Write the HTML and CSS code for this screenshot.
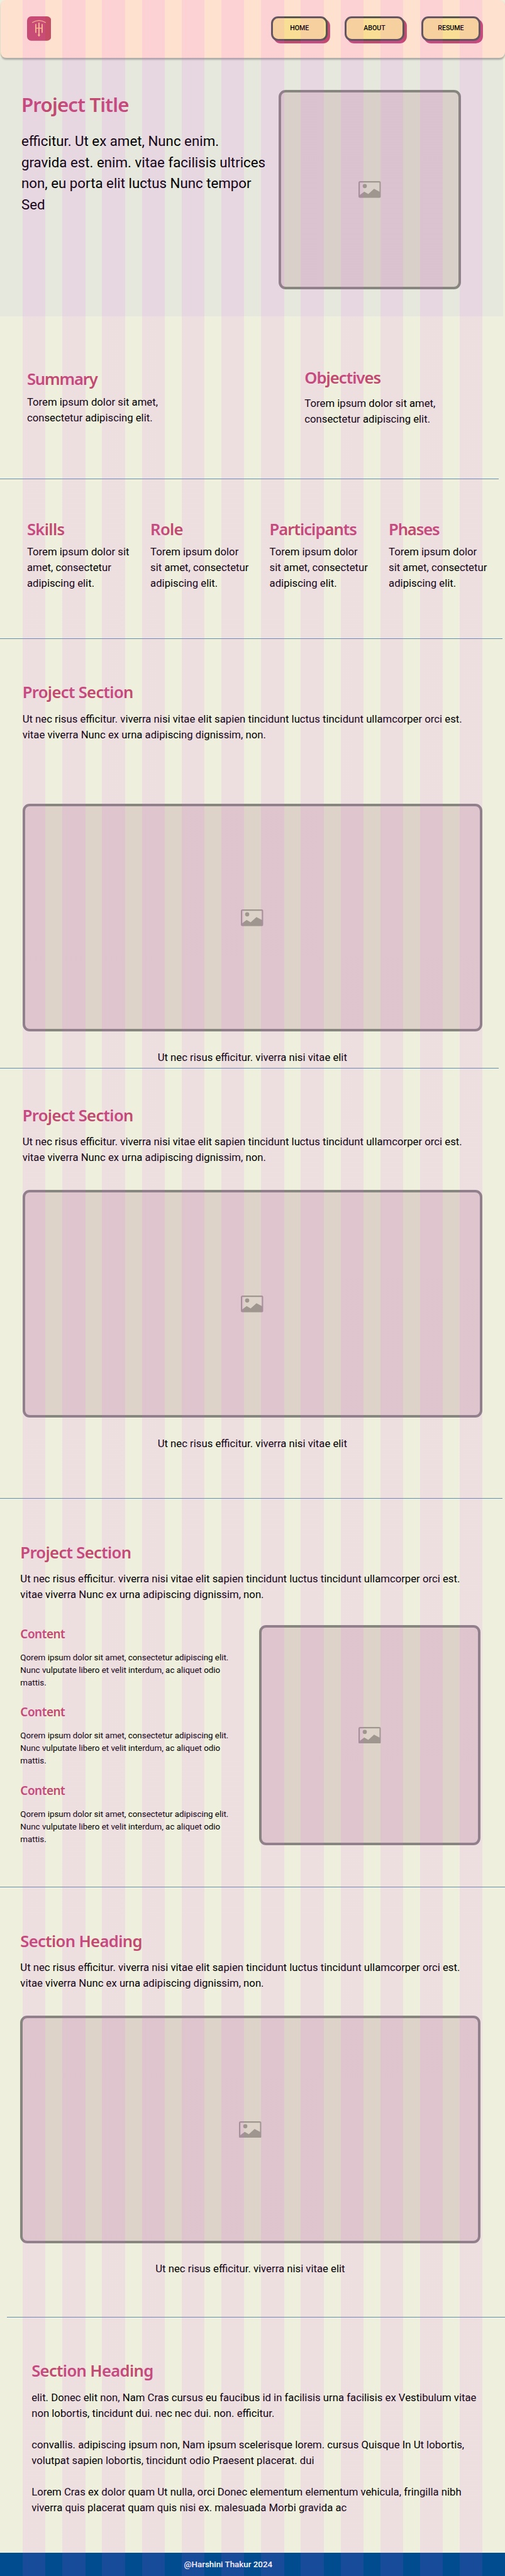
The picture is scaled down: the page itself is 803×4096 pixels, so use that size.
FILE: index.html
```html
<!DOCTYPE html>
<html lang="en">
<head>
<meta charset="utf-8">
<title>Project Title</title>
<link rel="stylesheet" href="styles.css">
</head>
<body>
<svg width="0" height="0" class="defs" aria-hidden="true">
  <symbol id="picture" viewBox="0 0 64 48">
    <path fill-rule="evenodd" d="M5 0h54a5 5 0 0 1 5 5v38a5 5 0 0 1-5 5H5a5 5 0 0 1-5-5V5a5 5 0 0 1 5-5zM4 4v35.500L16.500 30 28 37 44.500 21.800 60 30V4z"/>
    <circle cx="18" cy="14" r="6"/>
  </symbol>
</svg>
<div class="page">
  <header class="topbar">
    <svg class="logo" viewBox="0 0 69 69.500">
      <rect width="69" height="69.500" rx="12" fill="#c44c65"/>
      <g fill="none" stroke="#fdc588">
        <path d="M14.700 18Q34 5.500 53.300 18" stroke-width="2.200"/>
        <path d="M34 18v37" stroke-width="3.600"/>
        <path d="M25 22v25M43 22v25" stroke-width="3.200"/>
        <path d="M25 33.700h18" stroke-width="2.600"/>
      </g>
      <path d="M34 49l3.500 4.300L34 58.500l-3.500-5.200z" fill="#fdc588"/>
    </svg>
    <nav class="nav">
      <a class="btn btn-home">HOME</a>
      <a class="btn">ABOUT</a>
      <a class="btn">RESUME</a>
    </nav>
  </header>

  <section class="hero">
    <div class="hero-copy">
      <h1>Project Title</h1>
      <p>efficitur. Ut ex amet, Nunc enim.<br>gravida est. enim. vitae facilisis ultrices<br>non, eu porta elit luctus Nunc tempor<br>Sed</p>
    </div>
    <div class="frame frame-hero"><svg class="pic"><use href="#picture"/></svg></div>
  </section>

  <section class="overview">
    <div class="summary"><h2 class="tight">Summary</h2><p>Torem ipsum dolor sit amet,<br>consectetur adipiscing elit.</p></div>
    <div class="objectives"><h2 class="snug">Objectives</h2><p>Torem ipsum dolor sit amet,<br>consectetur adipiscing elit.</p></div>
  </section>
  <hr class="short">

  <section class="facts">
    <div><h2>Skills</h2><p>Torem ipsum dolor sit<br>amet, consectetur<br>adipiscing elit.</p></div>
    <div><h2>Role</h2><p>Torem ipsum dolor<br>sit amet, consectetur<br>adipiscing elit.</p></div>
    <div><h2 class="snug">Participants</h2><p>Torem ipsum dolor<br>sit amet, consectetur<br>adipiscing elit.</p></div>
    <div><h2 class="tight">Phases</h2><p>Torem ipsum dolor<br>sit amet, consectetur<br>adipiscing elit.</p></div>
  </section>
  <hr class="medium">

  <section class="block first">
    <h2>Project Section</h2>
    <p>Ut nec risus efficitur. viverra nisi vitae elit sapien tincidunt luctus tincidunt ullamcorper orci est.<br>vitae viverra Nunc ex urna adipiscing dignissim, non.</p>
    <div class="frame"><svg class="pic"><use href="#picture"/></svg></div>
    <p class="caption">Ut nec risus efficitur. viverra nisi vitae elit</p>
  </section>
  <hr class="short">

  <section class="block second">
    <h2>Project Section</h2>
    <p>Ut nec risus efficitur. viverra nisi vitae elit sapien tincidunt luctus tincidunt ullamcorper orci est.<br>vitae viverra Nunc ex urna adipiscing dignissim, non.</p>
    <div class="frame"><svg class="pic"><use href="#picture"/></svg></div>
    <p class="caption">Ut nec risus efficitur. viverra nisi vitae elit</p>
  </section>
  <hr class="medium">

  <section class="block third">
    <h2>Project Section</h2>
    <p>Ut nec risus efficitur. viverra nisi vitae elit sapien tincidunt luctus tincidunt ullamcorper orci est.<br>vitae viverra Nunc ex urna adipiscing dignissim, non.</p>
    <div class="split">
      <div class="contents">
        <div><h3>Content</h3><p>Qorem ipsum dolor sit amet, consectetur adipiscing elit.<br>Nunc vulputate libero et velit interdum, ac aliquet odio<br>mattis.</p></div>
        <div><h3>Content</h3><p>Qorem ipsum dolor sit amet, consectetur adipiscing elit.<br>Nunc vulputate libero et velit interdum, ac aliquet odio<br>mattis.</p></div>
        <div><h3>Content</h3><p>Qorem ipsum dolor sit amet, consectetur adipiscing elit.<br>Nunc vulputate libero et velit interdum, ac aliquet odio<br>mattis.</p></div>
      </div>
      <div class="frame frame-square"><svg class="pic"><use href="#picture"/></svg></div>
    </div>
  </section>
  <hr>

  <section class="block fourth">
    <h2>Section Heading</h2>
    <p>Ut nec risus efficitur. viverra nisi vitae elit sapien tincidunt luctus tincidunt ullamcorper orci est.<br>vitae viverra Nunc ex urna adipiscing dignissim, non.</p>
    <div class="frame"><svg class="pic"><use href="#picture"/></svg></div>
    <p class="caption">Ut nec risus efficitur. viverra nisi vitae elit</p>
  </section>
  <hr class="inset">

  <section class="closing">
    <h2>Section Heading</h2>
    <p>elit. Donec elit non, Nam Cras cursus eu faucibus id in facilisis urna facilisis ex Vestibulum vitae<br>non lobortis, tincidunt dui. nec nec dui. non. efficitur.</p>
    <p>convallis. adipiscing ipsum non, Nam ipsum scelerisque lorem. cursus Quisque In Ut lobortis,<br>volutpat sapien lobortis, tincidunt odio Praesent placerat. dui</p>
    <p>Lorem Cras ex dolor quam Ut nulla, orci Donec elementum elementum vehicula, fringilla nibh<br>viverra quis placerat quam quis nisi ex. malesuada Morbi gravida ac</p>
  </section>

  <footer class="footer">@Harshini Thakur 2024</footer>
  <div class="columns"></div>
</div>
</body>
</html>
```

FILE: styles.css
```css
/* 1rem is ten design pixels */
html { font-size: 5.5735px; }
* { box-sizing: border-box; margin: 0; padding: 0; }
body { background: #eeefdc; }
.defs { position: absolute; }

.page {
  position: relative;
  height: 4096px;
  overflow: hidden;
  display: flex;
  flex-direction: column;
  font: 400 3rem/4.5rem Roboto, sans-serif;
  color: #000;
  white-space: nowrap;
}
.page > * { flex: none; }

/* translucent layout columns drawn above the whole page */
.columns {
  position: absolute;
  z-index: 2;
  inset: 0 4.4444%;
  pointer-events: none;
  background: repeating-linear-gradient(90deg, rgba(230, 75, 255, .1) 0 36.432px, transparent 36.432px 63.199px);
}

h1, h2, h3 {
  font-family: "Noto Sans", "Open Sans", sans-serif;
  font-weight: 600;
  letter-spacing: -.026em;
  color: #c24a71;
}
h1 { padding-top: .4rem; font-size: 5.6rem; line-height: 6.4rem; }
h2 { padding-top: .6rem; font-size: 4.6rem; line-height: 4.8rem; }
h3 { padding-top: .2rem; font-size: 3.4rem; line-height: 3.8rem; }
.snug { letter-spacing: -.038em; }
.tight { letter-spacing: -.045em; }

.topbar {
  position: relative;
  z-index: 1;
  height: 16.45rem;
  margin-left: .2rem;
  padding: 4.7rem 7rem 0 7.5rem;
  display: flex;
  justify-content: space-between;
  align-items: flex-start;
  background: #fee1cf;
  border-radius: 1.6rem;
  box-shadow: 0 .4rem .4rem rgba(0, 0, 0, .25);
}
.logo { width: 6.9rem; height: 6.95rem; }
.nav { display: flex; gap: 4.9rem; }
.btn {
  width: 16.9rem;
  height: 7rem;
  border: .6rem solid #565650;
  border-radius: 2rem;
  background: #f9df95;
  box-shadow: .7rem .7rem 0 #c24a71;
  font-size: 1.9rem;
  font-weight: 500;
  line-height: 5.8rem;
  text-align: center;
}
.btn-home { width: 16.1rem; }

.hero {
  height: 73.85rem;
  width: 143.6rem;
  padding: 9.15rem 12.1rem 0 6.1rem;
  display: flex;
  justify-content: space-between;
  background: #e6e7dd;
}
.hero-copy { padding-top: .8rem; }
.hero-copy p { margin-top: 4.2rem; font-size: 4rem; line-height: 6rem; }

.frame {
  width: 131.2rem;
  height: 65rem;
  border: .8rem solid #87867e;
  border-radius: 2rem;
  background: #ddd3c8;
  display: flex;
  align-items: center;
  justify-content: center;
}
.frame-hero { width: 52rem; height: 56.9rem; background: #dad0ca; }
.frame-square { width: 63.1rem; height: 62.9rem; }
.pic { width: 6.4rem; height: 4.8rem; fill: #9f978f; }

hr { height: 1px; margin-bottom: -1px; border: 0; background: rgba(0, 76, 142, .58); }
hr.short { width: 142.2rem; }
hr.medium { width: 143.4rem; }
hr.inset { margin-left: 1.9rem; }

.overview { height: 46.26rem; padding: 14.55rem 0 0 7.7rem; display: flex; }
.summary { width: 79.2rem; padding-top: .4rem; }
.summary p { margin-top: 1.9rem; }
.objectives p { margin-top: 2.67rem; }

.facts {
  height: 45.47rem;
  padding: 11.62rem 0 0 7.7rem;
  display: grid;
  grid-template-columns: 35.2rem 34rem 34rem 30rem;
}
.facts p { margin-top: 1.65rem; }

.block { padding-left: 6.4rem; }
.block h2 + p { margin-top: 2.79rem; }
.block p + .frame { margin-top: 6.95rem; }
.block .caption { width: 131.2rem; margin-top: 5.1rem; text-align: center; }
.first { height: 122.72rem; padding-top: 12.52rem; }
.first h2 + p { margin-top: 2.93rem; }
.first p + .frame { margin-top: 17.46rem; }
.second { height: 122.67rem; padding-top: 10.6rem; }
.third { height: 110.78rem; padding: 12.66rem 0 0 5.8rem; }
.fourth { height: 122.74rem; padding: 12.68rem 0 0 5.8rem; }

.split { width: 131.2rem; margin-top: 6.3rem; display: flex; justify-content: space-between; }
.contents { padding-top: .6rem; display: flex; flex-direction: column; gap: 4.53rem; }
.contents p { margin-top: 2.99rem; font-size: 2.4rem; line-height: 3.6rem; }

.closing { height: 67.26rem; padding: 12.58rem 0 0 9rem; }
.closing h2 { margin-bottom: 2.88rem; }
.closing p { margin-bottom: 4.5rem; }

.footer {
  flex: 1 0 auto;
  padding: 1.1rem 0 0 52.5rem;
  background: #004c8e;
  color: #fff;
  font-size: 2.4rem;
  font-weight: 500;
}
```
